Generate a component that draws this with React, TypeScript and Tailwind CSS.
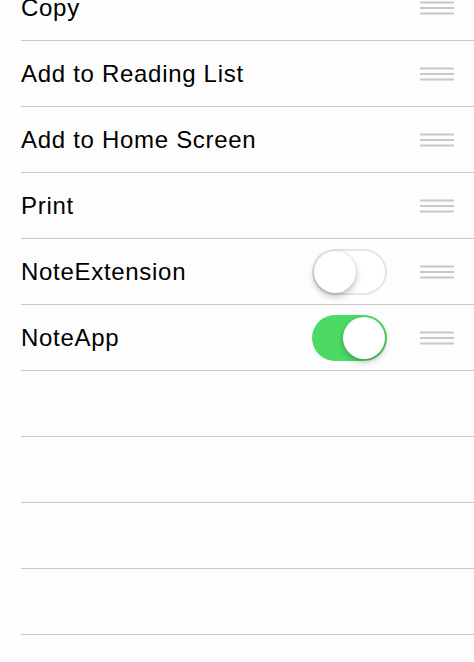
function Grip() {
  return (
    <svg width="34" height="14" viewBox="0 0 34 14" className="shrink-0">
      <rect x="0" y="0.5" width="34" height="2" fill="#c8c7cc" />
      <rect x="0" y="6" width="34" height="2" fill="#c8c7cc" />
      <rect x="0" y="11.5" width="34" height="2" fill="#c8c7cc" />
    </svg>
  )
}

function Toggle({ on }: { on: boolean }) {
  return on ? (
    <div className="relative h-[46px] w-[75px] rounded-full bg-[#4cd964]">
      <div className="absolute right-[2px] top-[2px] h-[42px] w-[42px] rounded-full bg-white shadow-[0_3px_6px_rgba(0,0,0,0.25)]" />
    </div>
  ) : (
    <div className="relative h-[46px] w-[75px] rounded-full border-2 border-[#e5e5ea] bg-white">
      <div className="absolute left-0 top-0 h-[42px] w-[42px] rounded-full bg-white shadow-[0_3px_6px_rgba(0,0,0,0.28),0_0_1px_rgba(0,0,0,0.2)]" />
    </div>
  )
}

const rows: { label: string; toggle?: boolean; grip: boolean }[] = [
  { label: 'Copy', grip: true },
  { label: 'Add to Reading List', grip: true },
  { label: 'Add to Home Screen', grip: true },
  { label: 'Print', grip: true },
  { label: 'NoteExtension', toggle: false, grip: true },
  { label: 'NoteApp', toggle: true, grip: true },
  { label: '', grip: false },
  { label: '', grip: false },
  { label: '', grip: false },
  { label: '', grip: false },
  { label: '', grip: false },
]

export default function App() {
  return (
    <div className="h-[662px] w-[474px] overflow-hidden bg-[#fdfdfd] font-['Liberation_Sans',Arial,sans-serif] text-black">
      <div className="-mt-[25px] pl-[21px]">
        {rows.map((r, i) => (
          <div key={i} className="flex h-[66px] items-center border-b border-[#c8c7cc] pr-[20px]">
            <span className="flex-1 text-[24px] tracking-[0.7px] leading-none">{r.label}</span>
            {r.toggle !== undefined && (
              <div className="mr-[33px]">
                <Toggle on={r.toggle} />
              </div>
            )}
            {r.grip && <Grip />}
          </div>
        ))}
      </div>
    </div>
  )
}
